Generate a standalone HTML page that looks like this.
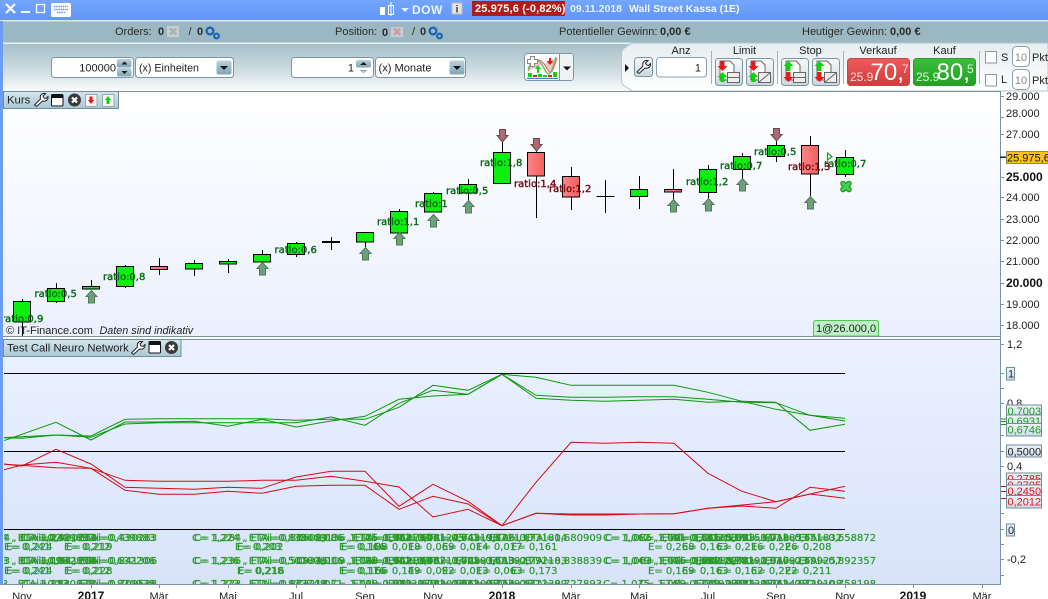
<!DOCTYPE html>
<html><head><meta charset="utf-8"><style>
html,body{margin:0;padding:0;background:#fff;width:1048px;height:599px;overflow:hidden}
svg{display:block;font-family:"Liberation Sans",sans-serif}
.dj{font-family:"DejaVu Sans",sans-serif;font-size:10px}
.g{fill:#0a6a16;stroke:#0a6a16;stroke-width:.4}
.r{fill:#760a12;stroke:#760a12;stroke-width:.4}
.gb rect{fill:#0cf010;stroke:#000}
.rb rect{fill:url(#rd);stroke:#000}
.w line{stroke:#000}
.d text{fill:#2a9a2a;stroke:#2a9a2a;stroke-width:.2;font-family:"DejaVu Sans",sans-serif;font-size:10px}
.ax{font-size:11px;fill:#222}
.lb{font-size:11px;fill:#222}
.in{font-size:11px;fill:#222}
.sm{font-size:11px;fill:#2a2a2a}
.bl{font-weight:bold}
.t{stroke:#7a93a3;fill:none}
.gl{fill:none;stroke:#0a9a0a;stroke-width:1}
.rl{fill:none;stroke:#d80a14;stroke-width:1}
.bx{fill:url(#bxg);stroke:#6f8b9c}
.btn{fill:url(#btng);stroke:#7d95a3}
</style></head><body>
<svg width="1048" height="599" viewBox="0 0 1048 599" xmlns="http://www.w3.org/2000/svg">
<defs>
<linearGradient id="top" x1="0" y1="0" x2="0" y2="1"><stop offset="0" stop-color="#74a6ff"/><stop offset="1" stop-color="#5f95f4"/></linearGradient>
<linearGradient id="tb" x1="0" y1="0" x2="0" y2="1"><stop offset="0" stop-color="#a7c0c9"/><stop offset=".5" stop-color="#c8d9df"/><stop offset="1" stop-color="#f9fbfb"/></linearGradient>
<linearGradient id="pn" x1="0" y1="0" x2="0" y2="1"><stop offset="0" stop-color="#e4edf0"/><stop offset="1" stop-color="#fff"/></linearGradient>
<linearGradient id="c1" x1="0" y1="0" x2="0" y2="1"><stop offset="0" stop-color="#fff"/><stop offset="1" stop-color="#eaf0fe"/></linearGradient>
<linearGradient id="c2" x1="0" y1="0" x2="0" y2="1"><stop offset="0" stop-color="#ebf1ff"/><stop offset="1" stop-color="#d8e3fa"/></linearGradient>
<linearGradient id="rd" x1="0" y1="0" x2="1" y2="0"><stop offset="0" stop-color="#ff8484"/><stop offset="1" stop-color="#f26060"/></linearGradient>
<linearGradient id="tab" x1="0" y1="0" x2="0" y2="1"><stop offset="0" stop-color="#d5e5ec"/><stop offset="1" stop-color="#a9c8d5"/></linearGradient>
<linearGradient id="bxg" x1="0" y1="0" x2="0" y2="1"><stop offset="0" stop-color="#eef2f8"/><stop offset="1" stop-color="#d0dcea"/></linearGradient>
<linearGradient id="btng" x1="0" y1="0" x2="0" y2="1"><stop offset="0" stop-color="#f8fafa"/><stop offset="1" stop-color="#c9d8de"/></linearGradient>
<linearGradient id="sp" x1="0" y1="0" x2="0" y2="1"><stop offset="0" stop-color="#bcd2dc"/><stop offset="1" stop-color="#7fa4b6"/></linearGradient>
<linearGradient id="sell" x1="0" y1="0" x2="0" y2="1"><stop offset="0" stop-color="#ee5b5b"/><stop offset="1" stop-color="#d23c3c"/></linearGradient>
<linearGradient id="buy" x1="0" y1="0" x2="0" y2="1"><stop offset="0" stop-color="#3cc03c"/><stop offset="1" stop-color="#22a022"/></linearGradient>
<g id="au"><path d="M.5 .5L6 6.5H3.5V13H-2.5V6.5H-5Z" fill="#6f9f7a" stroke="#4d7d5a"/></g>
<g id="ad"><path d="M.5 13L6 6.5H3.5V.5H-2.5V6.5H-5Z" fill="#a86c72" stroke="#74464a"/></g>
<g id="wr"><path d="M1 12.500L7 6.500C6 3 8 .5 12 1L9.500 3.500 10.500 5.500 12.500 6 14.500 4C15 7 12.500 9.500 9 8.500L3 14Z" fill="#fff" stroke="#222" stroke-width="1"/></g>
<g id="wn"><rect x=".5" y=".5" width="11.500" height="11.500" rx="1" fill="#fff" stroke="#111"/><rect x=".5" y=".5" width="11.500" height="3.500" fill="#111"/></g>
<g id="cl"><circle cx="6.500" cy="6.500" r="6.500" fill="#3a3a3a"/><path d="M4 4L9 9M9 4L4 9" stroke="#fff" stroke-width="2.200"/></g>
<g id="gear"><circle cx="5" cy="5" r="3.400" fill="none" stroke="#1a5fb4" stroke-width="2.200"/><circle cx="11.500" cy="10" r="2.400" fill="none" stroke="#1a5fb4" stroke-width="2"/></g>
<g id="dn"><path d="M-2 0H2V5H5L0 10 -5 5H-2Z" fill="#f01414"/></g>
<g id="up"><path d="M-2 10H2V5H5L0 0 -5 5H-2Z" fill="#0ad40a"/></g>
<clipPath id="chart"><rect x="4" y="92" width="996" height="244"/></clipPath>
<clipPath id="low"><rect x="4" y="340" width="996" height="244"/></clipPath>
</defs>

<!-- title bar -->
<rect width="1048" height="21" fill="url(#top)"/>
<rect y="20" width="1048" height="1.500" fill="#dbe8f2"/>
<path d="M6 4L15 13M15 4L6 13" stroke="#fff" stroke-width="2"/>
<rect x="21" y="11" width="9" height="2" fill="#fff"/>
<rect x="36.500" y="4.500" width="8" height="8" fill="none" stroke="#fff" stroke-width="1.300"/>
<rect x="51" y="3" width="20" height="14" rx="2" fill="#fff"/>
<path d="M54 6.500H68M54 9.500H68M57 12.500H65" stroke="#5f95f4" stroke-width="1.400" stroke-dasharray="1.500 .7"/>
<rect x="380" y="7" width="5" height="8" fill="#fff"/>
<rect x="388.500" y="5.500" width="5" height="9" fill="none" stroke="#fff"/>
<path d="M391 2V16" stroke="#fff"/>
<path d="M401 8H409L405 12Z" fill="#eaf2ff"/>
<text x="412" y="14" font-size="12" font-weight="bold" fill="#eef4ff" letter-spacing=".5">DOW</text>
<rect x="452" y="3" width="10" height="11" fill="#e4e4e4" stroke="#bbb"/>
<text x="457" y="12.500" font-size="10" font-weight="bold" fill="#333" text-anchor="middle">i</text>
<rect x="472" y="1" width="93" height="15" fill="#b01c1c"/>
<text x="475" y="12" font-size="11" font-weight="bold" fill="#fff" letter-spacing=".15">25.975,6 (-0,82%)</text>
<text x="570" y="12" font-size="10.500" font-weight="bold" fill="#e6f0ff">09.11.2018</text>
<text x="629" y="12" font-size="10.500" font-weight="bold" fill="#f2f7ff">Wall Street Kassa (1E)</text>

<!-- info row -->
<rect y="21.500" width="1048" height="21.500" fill="#9bb8c2"/>
<rect x="3" y="42.500" width="1045" height="1.500" fill="#e8f0f3"/>
<text x="115" y="35" class="sm">Orders:</text><text x="158" y="35" class="sm bl">0</text>
<rect x="167" y="26" width="12" height="11" fill="#c4cfd2"/><path d="M170 28.500L176 34.500M176 28.500L170 34.500" stroke="#a8b0b2" stroke-width="2.500"/>
<text x="188.500" y="35" class="sm">/</text><text x="197" y="35" class="sm bl">0</text>
<use href="#gear" x="205" y="26"/>
<text x="335" y="35" class="sm">Position:</text><text x="382" y="36" class="sm bl">0</text>
<rect x="391" y="27" width="12" height="10" fill="#c2cfd4"/><path d="M394 28.500L400 35M400 28.500L394 35" stroke="#cf9aa0" stroke-width="2.500"/>
<text x="412" y="35" class="sm">/</text><text x="420" y="35" class="sm bl">0</text>
<use href="#gear" x="428" y="26"/>
<text x="559" y="35" class="sm">Potentieller Gewinn:</text><text x="660" y="35" class="sm bl">0,00 €</text>
<text x="802" y="35" class="sm">Heutiger Gewinn:</text><text x="890" y="35" class="sm bl">0,00 €</text>

<!-- toolbar -->
<rect y="44" width="1048" height="47" fill="url(#tb)"/>
<rect x="0" y="21" width="3" height="564" fill="#6c9df2"/>
<path d="M632 43H1048V91H632L624.500 86Q621.500 84 621.500 80V54Q621.500 50 624.500 48Z" fill="url(#pn)" stroke="#b4c6ce"/>
<rect x="51.500" y="57.500" width="82" height="20" rx="3" fill="#fff" stroke="#7d96a4"/>
<text x="116" y="71.500" text-anchor="end" class="in">100000</text>
<rect x="117" y="59" width="14.500" height="8.500" rx="2" fill="url(#sp)"/><rect x="117" y="68" width="14.500" height="8.500" rx="2" fill="url(#sp)"/>
<path d="M121.500 64.500L124.500 61.500 127.500 64.500ZM121.500 71L124.500 74 127.500 71Z" fill="#111"/>
<rect x="135.500" y="57.500" width="98" height="20" rx="3" fill="#fff" stroke="#7d96a4"/>
<text x="139" y="71.500" class="in" textLength="60" lengthAdjust="spacingAndGlyphs">(x) Einheiten</text>
<rect x="216.500" y="60.500" width="15" height="14" rx="2" fill="url(#sp)"/><path d="M220 66H228L224 70Z" fill="#111"/>
<rect x="291.500" y="57.500" width="82" height="20" rx="3" fill="#fff" stroke="#7d96a4"/>
<text x="354" y="71.500" text-anchor="end" class="in">1</text>
<rect x="356" y="60" width="15" height="7.500" rx="2" fill="url(#sp)"/><path d="M360 65L363.500 62 367 65Z" fill="#111"/><path d="M361 70.500L363.500 72.500 366 70.500Z" fill="none" stroke="#8aa4b0"/>
<rect x="375.500" y="57.500" width="90" height="20" rx="3" fill="#fff" stroke="#7d96a4"/>
<text x="378.500" y="71.500" class="in" textLength="53" lengthAdjust="spacingAndGlyphs">(x) Monate</text>
<rect x="449.500" y="60.500" width="15" height="14" rx="2" fill="url(#sp)"/><path d="M453 66H461L457 70Z" fill="#111"/>

<!-- indicator button -->
<rect x="524.500" y="53.500" width="49" height="27" rx="3" fill="#fff" stroke="#7d96a4"/>
<path d="M559.500 54V80" stroke="#7d96a4"/>
<rect x="560" y="54" width="13" height="26" rx="2" fill="#f0f3f4"/>
<path d="M563 66.500H571L567 70.500Z" fill="#111"/>
<path d="M528 71C534 58 540 56 546 67S553 70 557 58" fill="#f3c8c8" stroke="#d86a6a"/>
<path d="M528 69C534 56 539 58 545 70S554 62 556 57" fill="none" stroke="#6fbf6f" stroke-width="1.500"/>
<path d="M530.500 56.500H534.500V59.500H537.500V63.500H534.500V66.500H530.500V63.500H527.500V59.500H530.500Z" fill="#fff" stroke="#888"/>
<path d="M537 73V69H535L538 65 541 69H539V73Z" fill="#0ad40a"/>
<path d="M549 58H551V61H553.500L550 65 546.500 61H549Z" fill="#f01414"/>
<path d="M528 73H532V77H528ZM538 74H542V77H538ZM543 75H547V77H543ZM553 72H557V77H553Z" fill="#0ad40a"/>
<path d="M533 75H537V77H533ZM548 75H552V77H548Z" fill="#e02020"/>
<path d="M527 78.500H558" stroke="#4a6fd8"/>

<!-- order panel -->
<path d="M625 64L629 68 625 72Z" fill="#111"/>
<rect x="634.500" y="57.500" width="18" height="19" rx="3" fill="url(#btng)" stroke="#7d95a3"/>
<use href="#wr" x="636" y="59.500"/>
<text x="681" y="54" text-anchor="middle" class="lb">Anz</text>
<rect x="656.500" y="57.500" width="50" height="19.500" rx="3" fill="#fff" stroke="#8ba0ad"/>
<text x="701" y="71.500" text-anchor="end" class="lb">1</text>
<path d="M711.500 51V84M777.500 51V84M843.500 51V84M979.500 51V84" stroke="#9db3bf"/>
<text x="744.500" y="54" text-anchor="middle" class="lb">Limit</text>
<text x="810.500" y="54" text-anchor="middle" class="lb">Stop</text>
<text x="878" y="54" text-anchor="middle" class="lb">Verkauf</text>
<text x="944.500" y="54" text-anchor="middle" class="lb">Kauf</text>

<rect x="715.500" y="58.500" width="27" height="27" rx="3" class="btn"/>
<path d="M720 61H730L734 65V80H720Z" fill="#fff" stroke="#666"/><rect x="727.500" y="72.500" width="12" height="10" fill="#eee" stroke="#666"/><path d="M727.500 77.500H739.500" stroke="#666"/>
<use href="#dn" x="722.500" y="61"/><use href="#up" x="722.500" y="72"/>
<rect x="746.500" y="58.500" width="27" height="27" rx="3" class="btn"/>
<path d="M751 61H761L765 65V80H751Z" fill="#fff" stroke="#666"/><rect x="758.500" y="72.500" width="12" height="10" fill="#eee" stroke="#666"/><path d="M759 82L770 73" stroke="#666"/>
<use href="#dn" x="753.500" y="61"/><use href="#up" x="753.500" y="72"/>
<rect x="781.500" y="58.500" width="27" height="27" rx="3" class="btn"/>
<path d="M786 61H796L800 65V80H786Z" fill="#fff" stroke="#666"/><rect x="793.500" y="72.500" width="12" height="10" fill="#eee" stroke="#666"/><path d="M793.500 77.500H805.500" stroke="#666"/>
<use href="#up" x="788.500" y="61"/><use href="#dn" x="788.500" y="72"/>
<rect x="812.500" y="58.500" width="27" height="27" rx="3" class="btn"/>
<path d="M817 61H827L831 65V80H817Z" fill="#fff" stroke="#666"/><rect x="824.500" y="72.500" width="12" height="10" fill="#eee" stroke="#666"/><path d="M825 82L836 73" stroke="#666"/>
<use href="#up" x="819.500" y="61"/><use href="#dn" x="819.500" y="72"/>

<rect x="847.500" y="58.500" width="62" height="27" rx="3" fill="url(#sell)" stroke="#c04848"/>
<text x="850" y="81" font-size="12" fill="#fbdcdc">25.9</text>
<text x="870.500" y="80" font-size="24" fill="#fff">70,</text>
<text x="902" y="73" font-size="12" fill="#fbdcdc">7</text>
<rect x="913.500" y="58.500" width="62" height="27" rx="3" fill="url(#buy)" stroke="#2c9c2c"/>
<text x="916" y="81" font-size="12" fill="#d8f8d8">25.9</text>
<text x="936.500" y="80" font-size="24" fill="#fff">80,</text>
<text x="967" y="73" font-size="12" fill="#d8f8d8">5</text>

<rect x="985.500" y="51.500" width="11" height="11.500" fill="#fff" stroke="#8b9ba5"/>
<text x="1001" y="61" class="lb">S</text>
<rect x="1012.500" y="46.500" width="17" height="20" rx="4" fill="#fff" stroke="#8ba0ad"/>
<text x="1021" y="61" text-anchor="middle" font-size="11" fill="#8a8a8a">10</text>
<text x="1032" y="61" class="lb">Pkt</text>
<rect x="985.500" y="74.500" width="11" height="11.500" fill="#fff" stroke="#8b9ba5"/>
<text x="1001" y="83" class="lb">L</text>
<rect x="1012.500" y="69.500" width="17" height="20" rx="4" fill="#fff" stroke="#8ba0ad"/>
<text x="1021" y="84" text-anchor="middle" font-size="11" fill="#8a8a8a">10</text>
<text x="1032" y="84" class="lb">Pkt</text>

<!-- chart backgrounds -->
<rect x="3" y="92" width="997" height="244" fill="url(#c1)"/>
<rect x="3" y="340" width="997" height="244" fill="url(#c2)"/>
<rect x="3" y="91" width="997" height="1" fill="#7a93a3"/>
<rect x="3" y="336" width="998" height="1" fill="#7a93a3"/>
<rect x="3" y="339" width="998" height="1" fill="#7a93a3"/>
<rect x="3" y="584" width="998" height="1" fill="#7a93a3"/>
<rect x="1000" y="91" width="1" height="494" fill="#7a93a3"/>

<!-- candles -->
<g clip-path="url(#chart)">
<g class="w">
<line x1="22.500" y1="299" x2="22.500" y2="336"/><line x1="56.500" y1="283" x2="56.500" y2="303"/><line x1="91.500" y1="280" x2="91.500" y2="289"/><line x1="125.500" y1="265" x2="125.500" y2="288"/><line x1="159.500" y1="258" x2="159.500" y2="275"/><line x1="194.500" y1="260" x2="194.500" y2="276"/><line x1="228.500" y1="259" x2="228.500" y2="273"/><line x1="262.500" y1="250" x2="262.500" y2="262"/><line x1="296.500" y1="242" x2="296.500" y2="257"/><line x1="331.500" y1="237" x2="331.500" y2="250"/><line x1="365.500" y1="232" x2="365.500" y2="247"/><line x1="399.500" y1="209" x2="399.500" y2="233"/><line x1="433.500" y1="192" x2="433.500" y2="212"/><line x1="468.500" y1="179" x2="468.500" y2="201"/><line x1="502.500" y1="142" x2="502.500" y2="184"/><line x1="536.500" y1="151" x2="536.500" y2="218"/><line x1="571.500" y1="167" x2="571.500" y2="210"/><line x1="605.500" y1="180" x2="605.500" y2="213"/><line x1="639.500" y1="176" x2="639.500" y2="209"/><line x1="673.500" y1="169" x2="673.500" y2="200"/><line x1="708.500" y1="165" x2="708.500" y2="198"/><line x1="742.500" y1="153" x2="742.500" y2="178"/><line x1="776.500" y1="141" x2="776.500" y2="162"/><line x1="810.500" y1="136" x2="810.500" y2="196"/><line x1="845.500" y1="150" x2="845.500" y2="177"/>
<line x1="322" y1="242" x2="340" y2="242" stroke-width="2"/><line x1="596.500" y1="196.500" x2="614.500" y2="196.500"/>
</g>
<g class="gb">
<rect x="13.500" y="301.500" width="17" height="20.500"/><rect x="47.500" y="288.500" width="17" height="13"/><rect x="82.500" y="286.500" width="17" height="2.500"/><rect x="116.500" y="266.500" width="17" height="20"/><rect x="185.500" y="263.500" width="17" height="5.500"/><rect x="219.500" y="261.500" width="17" height="2.500"/><rect x="253.500" y="254.500" width="17" height="7.500"/><rect x="287.500" y="243.500" width="17" height="11"/><rect x="356.500" y="232.500" width="17" height="9.500"/><rect x="390.500" y="211.500" width="17" height="21.500"/><rect x="424.500" y="193.500" width="17" height="18.500"/><rect x="459.500" y="184.500" width="17" height="8.500"/><rect x="493.500" y="152.500" width="17" height="31"/><rect x="630.500" y="189.500" width="17" height="7"/><rect x="699.500" y="169.500" width="17" height="23"/><rect x="733.500" y="156.500" width="17" height="13"/><rect x="767.500" y="145.500" width="17" height="11"/><rect x="836.500" y="157.500" width="17" height="17"/>
</g>
<g class="rb">
<rect x="150.500" y="266.500" width="17" height="3"/><rect x="527.500" y="152.500" width="17" height="23.500"/><rect x="562.500" y="176.500" width="17" height="20.500"/><rect x="664.500" y="189.500" width="17" height="2.500"/><rect x="801.500" y="145.500" width="17" height="28.500"/>
</g>
<use href="#au" x="91" y="290"/><use href="#au" x="262" y="262"/><use href="#au" x="365" y="247"/><use href="#au" x="399" y="232"/><use href="#au" x="433" y="214"/><use href="#au" x="468" y="200"/><use href="#au" x="673" y="199"/><use href="#au" x="708" y="198"/><use href="#au" x="742" y="178"/><use href="#au" x="810" y="196"/>
<use href="#ad" x="502" y="129"/><use href="#ad" x="536" y="138"/><use href="#ad" x="776" y="128"/>
<path d="M827.500 153L832 156.500 827.500 160Z" fill="none" stroke="#18a818" stroke-width="1.200"/>
<path d="M843 183.500L849 189.500M849 183.500L843 189.500" fill="none" stroke="#128a20" stroke-width="5.500" stroke-linecap="round"/>
<path d="M843 183.500L849 189.500M849 183.500L843 189.500" fill="none" stroke="#3ed04a" stroke-width="3.500" stroke-linecap="round"/>
<g class="dj">
<text class="g" x="1" y="322">ratio:0,9</text><text class="g" x="34.500" y="297">ratio:0,5</text><text class="g" x="103" y="280">ratio:0,8</text><text class="g" x="274.500" y="253">ratio:0,6</text><text class="g" x="377" y="225">ratio:1,1</text><text class="g" x="415" y="207">ratio:1</text><text class="g" x="446" y="194">ratio:0,5</text><text class="g" x="480" y="166">ratio:1,8</text><text class="r" x="514" y="187">ratio:1,4</text><text class="r" x="549" y="192">ratio:1,2</text><text class="g" x="686" y="185">ratio:1,2</text><text class="g" x="720" y="169">ratio:0,7</text><text class="g" x="754" y="155">ratio:0,5</text><text class="r" x="788" y="170">ratio:1,3</text><text class="g" x="824" y="167">ratio:0,7</text>
</g>
<text x="6" y="334" font-size="11" fill="#222">© IT-Finance.com</text>
<text x="99.500" y="334" font-size="10.800" font-style="italic" fill="#222">Daten sind indikativ</text>
<path d="M813.500 336V323Q813.500 320.500 816 320.500H876Q878.500 320.500 878.500 323V336Z" fill="#c0f0c8" stroke="#4ccc4c"/>
<text x="816" y="332" font-size="11" fill="#222">1@26.000,0</text>
</g>

<!-- lower chart -->
<g clip-path="url(#low)">
<path d="M3 373.500H845M3 451.500H845M3 529.500H845" stroke="#000" fill="none"/>
<polyline class="gl" points="3,437.700 22,438.300 56,435 91,436 125,419.300 159,418.700 194,418.700 228,418.700 262,418.700 296,420.300 331,419.300 365,419.300 399,407.300 433,385.300 468,390.300 502,374.300 536,377.300 571,385.300 605,385.300 639,385.300 674,385.300 708,392.300 742,401.300 776,409.300 810,415.300 845,421"/>
<polyline class="gl" points="3,441 56,422.300 91,440 125,422 159,422 194,421.300 228,426.300 262,419.300 296,427 331,421 365,416.300 399,399.300 433,396 468,394.300 502,374.300 536,398.300 571,400.300 605,401.300 639,400.300 674,399.300 708,402.300 742,401.300 776,402.300 810,430.300 845,424.300"/>
<polyline class="gl" points="3,437.700 56,435 91,437.300 125,424 159,422.700 194,422.700 228,422.700 262,422.700 296,422.700 331,417 365,425.300 399,403.300 433,390.300 468,394.300 502,374.300 536,395.300 571,397.300 605,397.300 639,396.700 674,396.700 708,399.300 742,402.300 776,402.700 810,415.300 845,418.300"/>
<polyline class="rl" points="3,464 22,466 56,449.300 91,464 125,487.300 159,488.300 194,489.300 228,487.300 262,488.300 296,477 331,471.300 365,471.300 399,506.300 433,484.300 468,501.300 502,525.700 536,482.300 571,442.300 605,443.300 639,442.300 674,443.300 708,473.300 742,491.300 776,501.700 810,494 845,498.300"/>
<polyline class="rl" points="3,470 22,465 56,462.300 91,468.300 125,480.300 159,481.300 194,481.300 228,481.300 262,480.300 296,480.300 331,476.300 365,481.300 399,487 433,517 468,509.300 502,525.700 536,513.300 571,514 605,514 639,514 674,513.700 708,508.300 742,505 776,501.700 810,494 845,486.300"/>
<polyline class="rl" points="3,464 56,467.700 91,468.300 125,490.300 159,494.300 194,494.300 228,491.300 262,493.300 296,486.300 331,485.300 365,485.300 399,509.300 433,496.300 468,504 502,525.700 536,513.300 571,515 605,515 639,514 674,513.700 708,508.300 742,506 776,508.300 810,487.300 845,491.300"/>
<g class="d">
<text x="-39" y="541">C= 1,224 , ETAi=0,439883</text><text x="-37" y="541">C= 1,284 , ETAi=0,930283</text><text x="21" y="541">C= 1,224 , ETAi=0,439883</text><text x="23" y="541">C= 1,232 , ETAi=0,430283</text>
<text x="192" y="541">C= 1,224 , ETAi=0,838069</text><text x="194" y="541">C= 1,284 , ETAi=0,836089</text><text x="296" y="541">C= 1,086 , ETAi=0,912134</text><text x="298" y="541">C= 1,136 , ETAi=0,812734</text><text x="331" y="541">C= 1,175 , ETAi=0,781245</text><text x="365" y="541">C= 1,054 , ETAi=0,641198</text><text x="399" y="541">C= 1,021 , ETAi=0,872130</text><text x="433" y="541">C= 1,043 , ETAi=0,731814</text><text x="468" y="541">C= 1,106 , ETAi=0,680909</text>
<text x="603" y="541">C= 1,062 , ETAi=0,711253</text><text x="605" y="541">C= 1,086 , ETAi=0,611853</text><text x="639" y="541">C= 1,091 , ETAi=0,891534</text><text x="674" y="541">C= 1,016 , ETAi=0,711853</text><text x="708" y="541">C= 1,033 , ETAi=0,651832</text><text x="742" y="541">C= 1,018 , ETAi=0,658872</text>
<text x="4" y="550">E= 0,241</text><text x="6" y="550">E= 0,224</text><text x="64" y="550">E= 0,212</text><text x="66" y="550">E= 0,219</text><text x="235" y="550">E= 0,203</text><text x="237" y="550">E= 0,202</text><text x="339" y="550">E= 0,166</text><text x="341" y="550">E= 0,108</text><text x="374" y="550">E= 0,018</text><text x="408" y="550">E= 0,069</text><text x="442" y="550">E= 0,014</text><text x="476" y="550">E= 0,017</text><text x="511" y="550">E= 0,161</text><text x="648" y="550">E= 0,268</text><text x="682" y="550">E= 0,163</text><text x="717" y="550">E= 0,216</text><text x="751" y="550">E= 0,226</text><text x="785" y="550">E= 0,208</text>
<text x="-39" y="564">C= 1,193 , ETAi=0,832806</text><text x="-37" y="564">C= 1,253 , ETAi=0,641206</text><text x="21" y="564">C= 1,196 , ETAi=0,632206</text><text x="23" y="564">C= 1,194 , ETAi=0,841306</text>
<text x="192" y="564">C= 1,236 , ETAi=0,507806</text><text x="194" y="564">C= 1,236 , ETAi=0,509346</text><text x="296" y="564">C= 1,016 , ETAi=0,912134</text><text x="298" y="564">C= 1,119 , ETAi=0,612884</text><text x="331" y="564">C= 1,098 , ETAi=0,832134</text><text x="365" y="564">C= 1,042 , ETAi=0,701934</text><text x="399" y="564">C= 1,057 , ETAi=0,683921</text><text x="433" y="564">C= 1,028 , ETAi=0,792183</text><text x="468" y="564">C= 1,113 , ETAi=0,838839</text>
<text x="603" y="564">C= 1,049 , ETAi=0,690122</text><text x="605" y="564">C= 1,063 , ETAi=0,690882</text><text x="639" y="564">C= 1,076 , ETAi=0,781923</text><text x="674" y="564">C= 1,032 , ETAi=0,810923</text><text x="708" y="564">C= 1,021 , ETAi=0,699257</text><text x="742" y="564">C= 1,047 , ETAi=0,892357</text>
<text x="4" y="574">E= 0,241</text><text x="6" y="574">E= 0,224</text><text x="64" y="574">E= 0,212</text><text x="66" y="574">E= 0,228</text><text x="237" y="574">E= 0,218</text><text x="238" y="574">E= 0,216</text><text x="339" y="574">E= 0,176</text><text x="341" y="574">E= 0,166</text><text x="374" y="574">E= 0,149</text><text x="408" y="574">E= 0,092</text><text x="442" y="574">E= 0,013</text><text x="476" y="574">E= 0,063</text><text x="511" y="574">E= 0,173</text><text x="648" y="574">E= 0,169</text><text x="682" y="574">E= 0,163</text><text x="717" y="574">E= 0,162</text><text x="751" y="574">E= 0,222</text><text x="785" y="574">E= 0,211</text>
<text x="-39" y="587">C= 1,323 , ETAi=0,830938</text><text x="21" y="587">C= 1,323 , ETAi=0,830938</text><text x="23" y="587">C= 1,283 , ETAi=0,709538</text><text x="192" y="587">C= 1,223 , ETAi=0,833748</text><text x="194" y="587">C= 1,323 , ETAi=0,873218</text><text x="296" y="587">C= 1,071 , ETAi=0,820398</text><text x="331" y="587">C= 1,098 , ETAi=0,721028</text><text x="365" y="587">C= 1,073 , ETAi=0,812098</text><text x="399" y="587">C= 1,082 , ETAi=0,723928</text><text x="433" y="587">C= 1,061 , ETAi=0,712389</text><text x="468" y="587">C= 1,054 , ETAi=0,727893</text><text x="603" y="587">C= 1,075 , ETAi=0,731928</text><text x="639" y="587">C= 1,089 , ETAi=0,821398</text><text x="674" y="587">C= 1,031 , ETAi=0,712438</text><text x="708" y="587">C= 1,024 , ETAi=0,729108</text><text x="742" y="587">C= 1,061 , ETAi=0,758198</text>
</g>
</g>

<!-- tabs -->
<rect x="3.500" y="91.500" width="115" height="17" fill="url(#tab)" stroke="#6f8fa0"/>
<text x="7" y="103.500" font-size="11.300" fill="#222">Kurs</text>
<use href="#wr" x="33.500" y="92.500"/><use href="#wn" x="51" y="94"/><use href="#cl" x="68" y="93.500"/>
<rect x="85.500" y="94.500" width="11.500" height="12" fill="#f4f4f4" stroke="#9aa"/><path d="M88 100H94L91 104Z M89.500 96.500H92.500V100H89.500Z" fill="#f01414"/>
<rect x="102.500" y="94.500" width="11.500" height="12" fill="#f4f4f4" stroke="#9aa"/><path d="M105 100H111L108 96Z M106.500 100H109.500V104H106.500Z" fill="#0ad40a"/>
<rect x="3.500" y="339.500" width="177.500" height="17" fill="url(#tab)" stroke="#6f8fa0"/>
<text x="7" y="351.500" font-size="11.300" fill="#222">Test Call Neuro Network</text>
<use href="#wr" x="130.500" y="340.500"/><use href="#wn" x="148.500" y="341"/><use href="#cl" x="165" y="341"/>

<!-- upper axis -->
<path class="t" d="M1000 96.500H1004M1000 117.500H1004M1000 134.500H1004M1000 177.500H1004M1000 197.500H1004M1000 219.500H1004M1000 240.500H1004M1000 261.500H1004M1000 283.500H1004M1000 304.500H1004M1000 325.500H1004"/>
<text x="1006" y="100" class="ax">29.000</text><text x="1006" y="117" class="ax">28.000</text><text x="1006" y="138" class="ax">27.000</text>
<text x="1006" y="181" font-size="12" font-weight="bold" fill="#111">25.000</text>
<text x="1006" y="201" class="ax">24.000</text><text x="1006" y="223" class="ax">23.000</text><text x="1006" y="244" class="ax">22.000</text><text x="1006" y="265" class="ax">21.000</text>
<text x="1006" y="287" font-size="12" font-weight="bold" fill="#111">20.000</text>
<text x="1006" y="308" class="ax">19.000</text><text x="1006" y="329" class="ax">18.000</text>
<rect x="1000" y="156.500" width="6" height="1.500" fill="#222"/>
<rect x="1006.500" y="151.500" width="42" height="12" fill="#f9c40f" stroke="#9a8a50"/>
<text x="1007" y="161.500" font-size="11" fill="#111">25.975,6</text>

<!-- lower axis -->
<path class="t" d="M1000 344.500H1004M1000 373.500H1004M1000 388.500H1004M1000 403.500H1004M1000 435.500H1004M1000 451.500H1004M1000 466.500H1004M1000 513.500H1004M1000 529.500H1004M1000 544.500H1004M1000 559.500H1004M1000 575.500H1004"/>
<text x="1007" y="348" class="ax">1,2</text><text x="1007" y="407" class="ax">0,8</text><text x="1007" y="470" class="ax">0,4</text><text x="1007" y="563" class="ax">-0,2</text>
<rect x="1006.500" y="367.500" width="8" height="12.500" class="bx"/><text x="1008" y="377.500" class="ax">1</text>
<rect x="1006.500" y="524" width="8" height="12" class="bx"/><text x="1008" y="534" class="ax">0</text>
<rect x="1006.500" y="405" width="35" height="12" class="bx"/><text x="1007.500" y="415" font-size="11" fill="#18a018">0,7003</text>
<rect x="1006.500" y="415" width="35" height="12" class="bx"/><text x="1007.500" y="425" font-size="11" fill="#18a018">0,6931</text>
<rect x="1006.500" y="423.500" width="35" height="12.500" class="bx"/><text x="1007.500" y="433.500" font-size="11" fill="#18a018">0,6746</text>
<path d="M1001 419H1006M1001 421.500H1006M1001 424.500H1006" stroke="#0a9a0a"/>
<rect x="1006.500" y="445" width="35" height="12" class="bx"/><text x="1007.500" y="455.500" font-size="11" fill="#222">0,5000</text>
<rect x="1006.500" y="473" width="35" height="12" class="bx"/><text x="1007.500" y="482.500" font-size="11" fill="#e01818">0,2785</text>
<rect x="1006.500" y="479.500" width="35" height="12" class="bx"/><text x="1007.500" y="489" font-size="11" fill="#e01818">0,2705</text>
<rect x="1006.500" y="485" width="35" height="12" class="bx"/><text x="1007.500" y="495" font-size="11" fill="#e01818">0,2450</text>
<rect x="1006.500" y="495.500" width="35" height="12.500" class="bx"/><text x="1007.500" y="505.500" font-size="11" fill="#e01818">0,2012</text>
<path d="M1001 486.500H1006M1001 491.500H1006M1001 498.500H1006" stroke="#d80a14"/>

<!-- x axis -->
<path class="t" d="M22.500 584V588M91.500 584V588M159.500 584V588M228.500 584V588M296.500 584V588M365.500 584V588M433.500 584V588M502.500 584V588M571.500 584V588M639.500 584V588M708.500 584V588M776.500 584V588M845.500 584V588M913.500 584V588M982.500 584V588"/>
<g text-anchor="middle" class="ax">
<text x="22" y="600">Nov</text><text x="91" y="600" font-size="12" font-weight="bold" fill="#111">2017</text><text x="159" y="600">Mär</text><text x="228" y="600">Mai</text><text x="296" y="600">Jul</text><text x="365" y="600">Sep</text><text x="433" y="600">Nov</text><text x="502" y="600" font-size="12" font-weight="bold" fill="#111">2018</text><text x="571" y="600">Mär</text><text x="639" y="600">Mai</text><text x="708" y="600">Jul</text><text x="776" y="600">Sep</text><text x="845" y="600">Nov</text><text x="913" y="600" font-size="12" font-weight="bold" fill="#111">2019</text><text x="982" y="600">Mär</text>
</g>
</svg>
</body></html>
